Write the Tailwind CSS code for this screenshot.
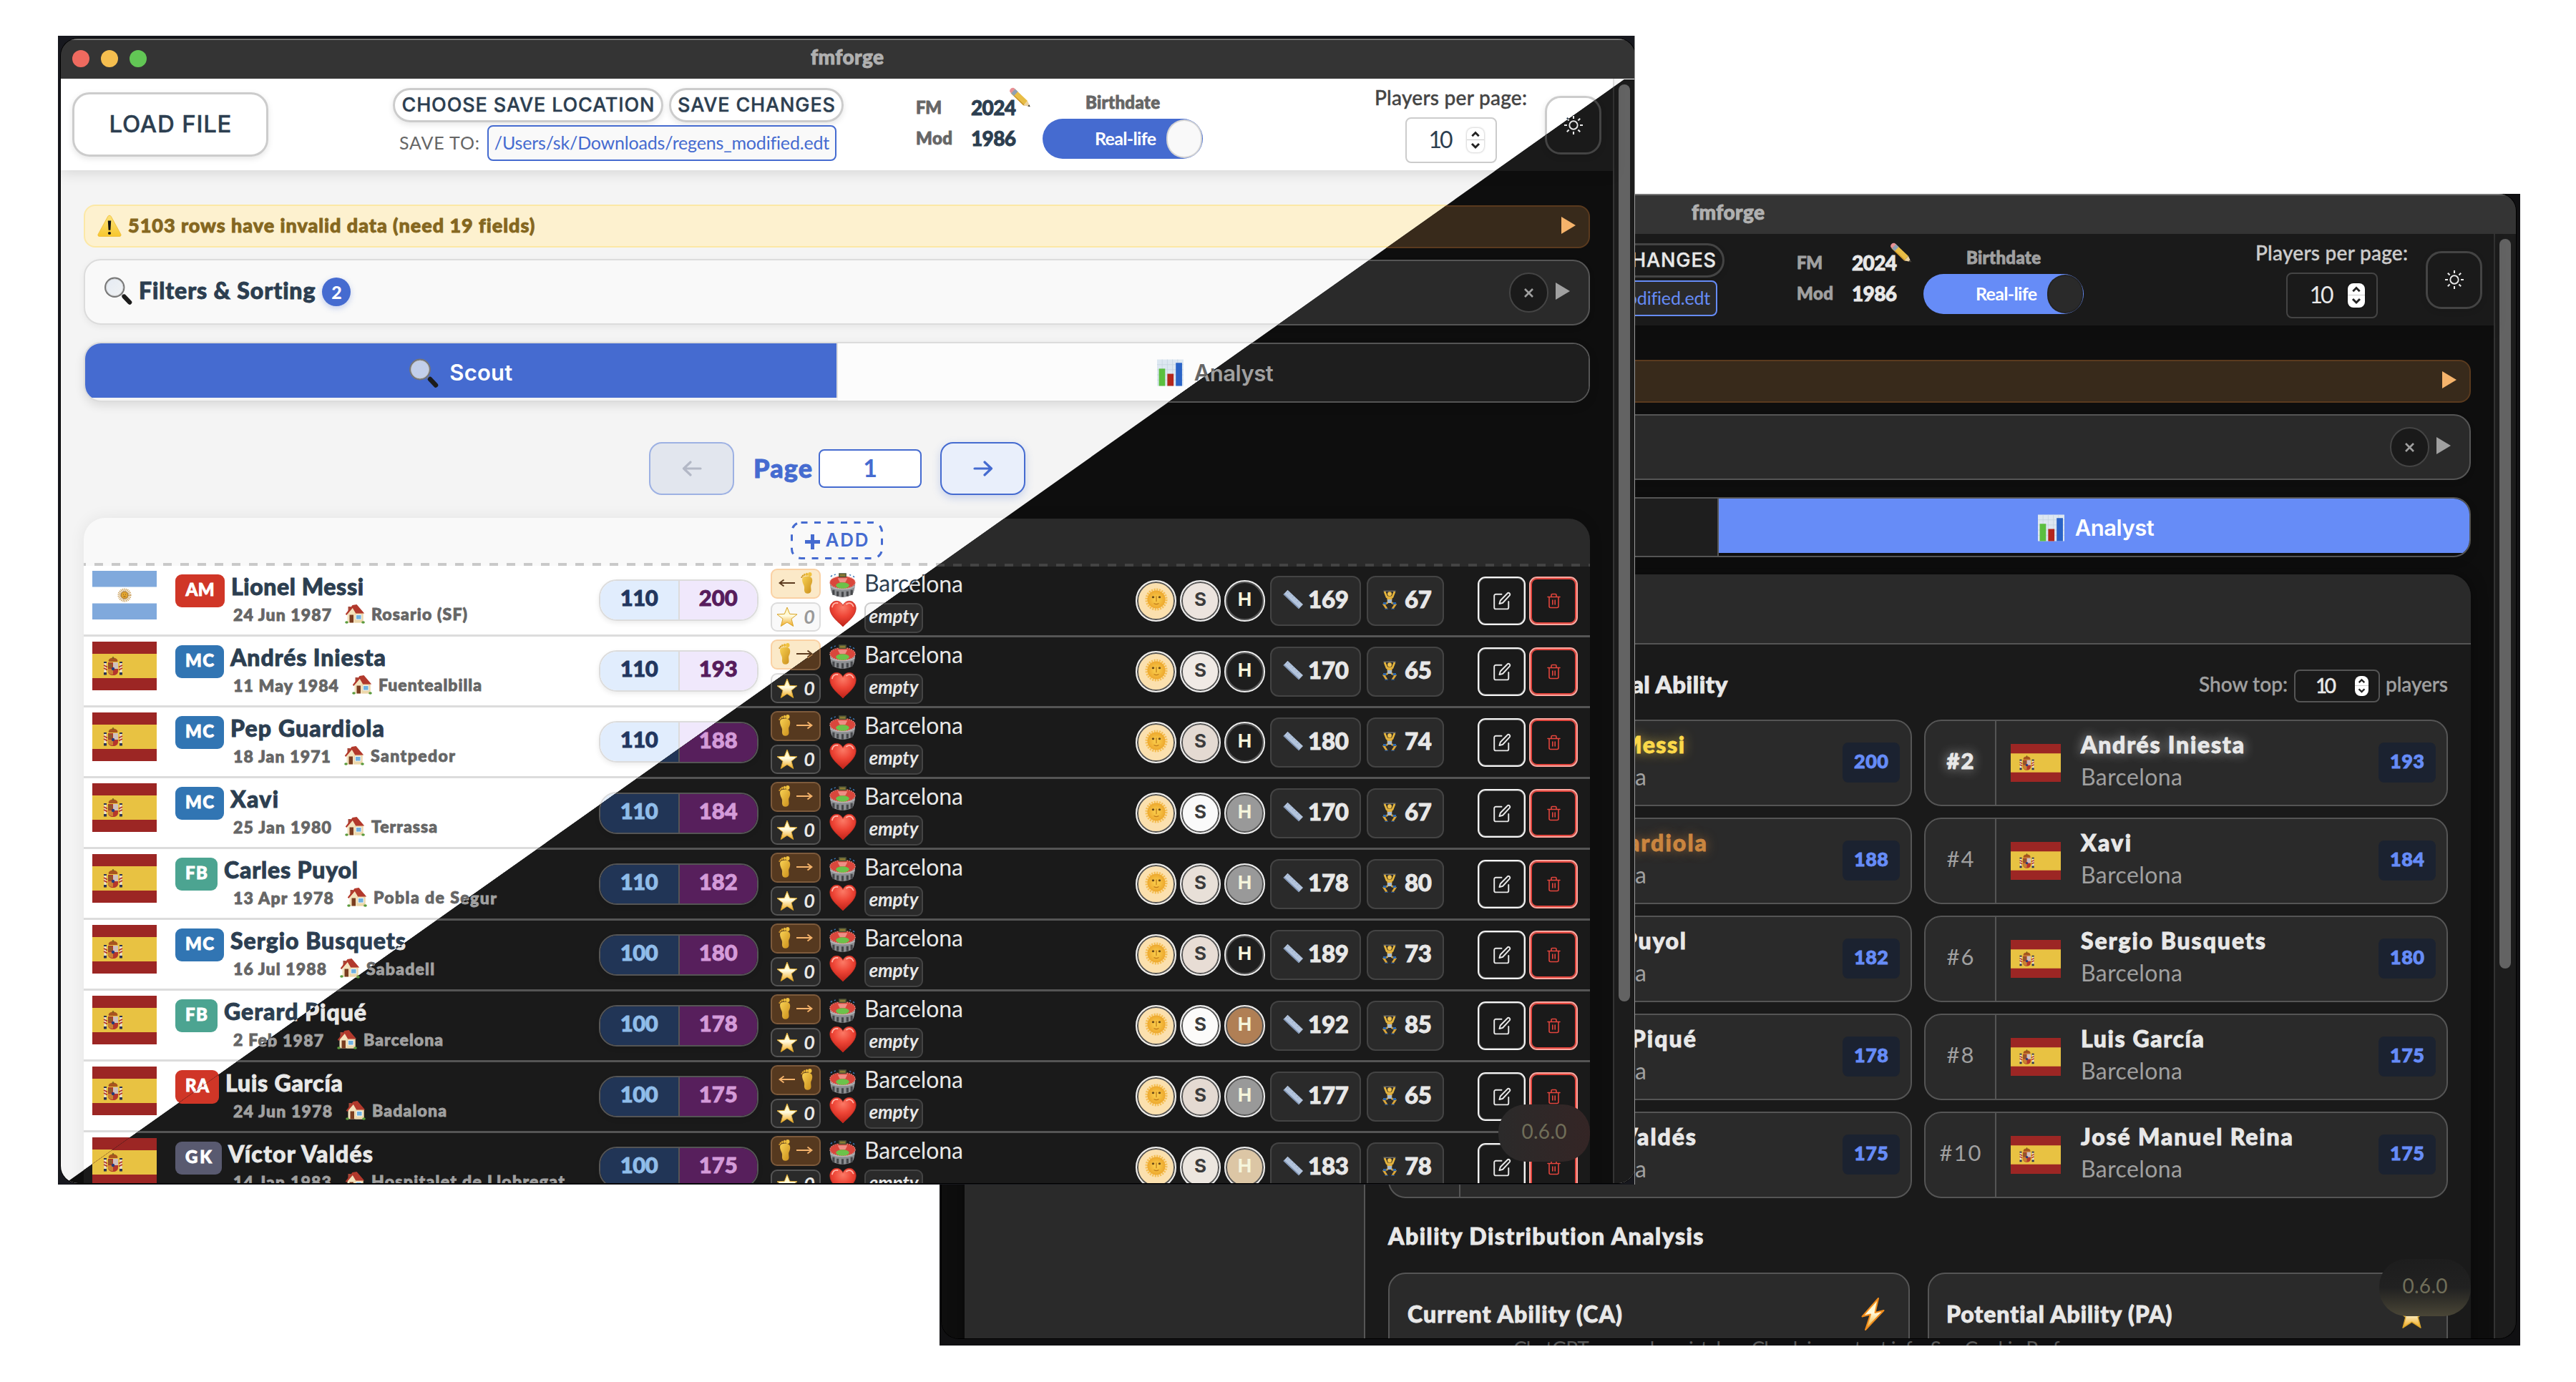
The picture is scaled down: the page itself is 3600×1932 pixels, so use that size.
<!DOCTYPE html>
<html lang="en">
<head>
<meta charset="utf-8">
<title>fmforge</title>
<script src="https://cdn.jsdelivr.net/npm/@tailwindcss/browser@4"></script>
</head>
<body class="bg-white">
<svg class="absolute w-0 h-0" aria-hidden="true">
  <defs>
    <linearGradient id="gold" x1="0" y1="0" x2="0" y2="1"><stop offset="0" stop-color="#fff3b0"/><stop offset=".45" stop-color="#fffbe0"/><stop offset="1" stop-color="#f0a81c"/></linearGradient>
    <linearGradient id="warm" x1="0" y1="0" x2="0" y2="1"><stop offset="0" stop-color="#fbe27a"/><stop offset="1" stop-color="#f7c72e"/></linearGradient>
    <radialGradient id="red" cx=".5" cy=".25" r=".8"><stop offset="0" stop-color="#fb7a66"/><stop offset=".45" stop-color="#ee4536"/><stop offset="1" stop-color="#b81d14"/></radialGradient>
    <linearGradient id="foot" x1="0" y1="0" x2="1" y2="1"><stop offset="0" stop-color="#f9d254"/><stop offset="1" stop-color="#c98d1a"/></linearGradient>
    <radialGradient id="sun"><stop offset="0" stop-color="#fbd04e"/><stop offset="1" stop-color="#eda82e"/></radialGradient>
    <linearGradient id="glass" x1="0" y1="0" x2="1" y2="1"><stop offset="0" stop-color="#dfe7f2" stop-opacity=".8"/><stop offset="1" stop-color="#eef0f2" stop-opacity=".75"/></linearGradient>
  </defs>
  <symbol id="i-warn" viewBox="0 0 34 31"><path d="M17 1.2c1 0 1.7.5 2.2 1.4l13.6 24.8c.9 1.700-.1 3.100-1.900 3.100H3.100c-1.800 0-2.800-1.400-1.900-3.100L14.800 2.600c.5-.9 1.200-1.400 2.200-1.400z" fill="url(#warm)" stroke="#efb92c" stroke-width=".8"/><path d="M14.800 8.500h4.400l-.8 13.200h-2.800z" fill="#111"/><circle cx="17" cy="26" r="2.100" fill="#111"/></symbol>
  <symbol id="i-glass" viewBox="0 0 42 42"><path d="M27 27l3 3" stroke="#8d8d8d" stroke-width="3.500"/><path d="M30 29.500l8 8.500" stroke="#1c1c1c" stroke-width="6.500" stroke-linecap="round"/><circle cx="16" cy="16" r="13.800" fill="url(#glass)" stroke="#777" stroke-width="2.200"/><circle cx="16" cy="16" r="12.400" fill="none" stroke="#c4c4c4" stroke-width=".8"/></symbol>
  <symbol id="i-chart" viewBox="0 0 36 36"><path d="M0 0h36v36H0z" fill="#dde7f1"/><path d="M0 7h36M0 14h36M0 21h36M0 28h36M7 0v36M14 0v36M21 0v36M28 0v36" stroke="#c5d2df" stroke-width=".7"/><path d="M2.500 12.500H11V36H2.500z" fill="#5bbf3f"/><path d="M14 19.500h8.500V36H14z" fill="#b3261c"/><path d="M25.500 4.500H34V36h-8.500z" fill="#2a63c6"/></symbol>
  <symbol id="i-house" viewBox="0 0 28 28"><path d="M4.500 4h4v8h-4z" fill="#a5483a"/><path d="M3.500 13.500L11 5l5 0 9.500 8.500V26.500H3.500z" fill="#f3e2bd"/><path d="M13.500 12.500h12v14h-12z" fill="#ecd7ab"/><path d="M.8 14.500L10.500 2 16.500 1l10.700 12.500h-12L10.800 6 2.300 16z" fill="#b2392c"/><path d="M6.500 15.500h5.500v11H6.500z" fill="#7a3d20"/><path d="M15.500 15.500h7.500v6.500h-7.500z" fill="#6fb1e0" stroke="#fff" stroke-width=".8"/><ellipse cx="2.500" cy="26" rx="2.300" ry="1.800" fill="#5a9a3c"/><ellipse cx="25.500" cy="26" rx="2.300" ry="1.800" fill="#5a9a3c"/></symbol>
  <symbol id="i-foot" viewBox="0 0 17 30"><path d="M2.500 8c1-2.600 9.500-4 12.500-.5 2.200 3 1 7-.4 10-1 2.500.1 5.500-.1 8.300-.2 2.800-2.400 4-4.800 4-2.600 0-4.500-1.600-4.700-4.300-.2-2.800.6-4.500-.6-7.200C3 15.500 1.200 11.500 2.500 8z" fill="url(#foot)"/><ellipse cx="12.800" cy="3" rx="2.700" ry="2.900" fill="#f0c240"/><ellipse cx="8.500" cy="2.900" rx="1.700" ry="2.100" fill="#eab93a"/><ellipse cx="5.300" cy="3.600" rx="1.400" ry="1.800" fill="#e0ad34"/><ellipse cx="2.900" cy="5" rx="1.200" ry="1.500" fill="#d6a02c"/><ellipse cx="1.400" cy="6.900" rx="1" ry="1.200" fill="#c9922a"/></symbol>
  <symbol id="i-stadium" viewBox="0 0 38 36"><path d="M.8 14c0 4 1 11 2.600 15 1.600 3.500 8 6.200 15.600 6.200s14-2.700 15.600-6.200c1.600-4 2.600-11 2.600-15z" fill="#8d8f92"/><path d="M6 25v7M12 27v7M19 27.500V35M26 27v7M32 25v7" stroke="#45474a" stroke-width="3.200"/><path d="M1.500 19.500c5 5.500 30 5.500 35 0" stroke="#b9bbbd" stroke-width="1.400" fill="none"/><ellipse cx="19" cy="14" rx="18.200" ry="9" fill="#d9473c"/><ellipse cx="19" cy="14" rx="18.200" ry="9" fill="none" stroke="#f0948a" stroke-width="1.200" stroke-dasharray="1.500 1.500"/><path d="M12 8l3 6h8l3-6z" fill="#ee8f86"/><ellipse cx="19" cy="18.500" rx="9.500" ry="4.300" fill="#6cc24a"/><path d="M13.500.8h11v6h-11z" fill="#4d5338"/><path d="M15 2.300h8v3h-8z" fill="#8a7b33"/><path d="M2 6l2-2M7 3.500l2-1M29 3l2 1M34 5l2 1.500" stroke="#3b78b8" stroke-width="1.600"/></symbol>
  <symbol id="i-heart" viewBox="0 0 38 37"><path d="M19 36.500C14 31 .8 22 .8 11.200.8 5 5 .8 10 .8c4.200 0 7.400 2.500 9 6.200 1.600-3.700 4.800-6.200 9-6.200 5 0 9.200 4.200 9.200 10.400C37.200 22 24 31 19 36.500z" fill="url(#red)" stroke="#c22a20" stroke-width=".8"/><path d="M4 9c1-4 4-6 7.500-5.500M24 5c4-3 8-1 9.500 3" stroke="#ffb5a8" stroke-width="1.800" fill="none" stroke-linecap="round"/></symbol>
  <symbol id="i-star" viewBox="0 0 30 29"><path d="M15 1l3.700 9.300 10.300.5-8 6.400 2.700 10.300L15 21.900l-8.700 5.600L9 17.200l-8-6.400 10.300-.5z" fill="url(#gold)" stroke="#d9a52b" stroke-width="1" stroke-linejoin="round"/></symbol>
  <symbol id="i-sunface" viewBox="0 0 32 32"><circle cx="16" cy="16" r="13.800" fill="none" stroke="#f5bf55" stroke-width="3.500" stroke-dasharray="2.200 1.400"/><circle cx="16" cy="16" r="12.500" fill="url(#sun)"/><ellipse cx="11.500" cy="12.800" rx="1.700" ry="1.500" fill="#6b4a18"/><ellipse cx="20.500" cy="12.800" rx="1.700" ry="1.500" fill="#6b4a18"/><path d="M16 12v6.500M13 21.800c1.800 1 4.200 1 6 0" stroke="#c07c1c" stroke-width="1.300" fill="none" stroke-linecap="round"/></symbol>
  <symbol id="i-ruler" viewBox="0 0 28 28"><path d="M6.500.8L28 21l-6 6.200L.5 7z" fill="#b3c4dc"/><path d="M22 27.200L.5 7l1-1.300 21.500 20.300z" fill="#7e93b3"/><path d="M8 2.600l-2 2.400M11.500 5.800L10 7.600M15 9l-2 2.400M18.500 12.200L17 14M22 15.400l-2 2.400" stroke="#8fa4c4" stroke-width=".9"/></symbol>
  <symbol id="i-lift" viewBox="0 0 26 28"><path d="M1 2.200h24" stroke="#8a8a8a" stroke-width="1"/><path d="M.5 0h4v7h-4zM21.500 0h4v7h-4z" fill="#2c2c2c"/><path d="M6 3l3 7.500 4 1 4-1 3-7.500" stroke="#e6b53b" stroke-width="2.800" fill="none"/><circle cx="13" cy="6.200" r="3" fill="#eec04c"/><path d="M9 9.500h8l-1 9h-6z" fill="#e0b040"/><path d="M10 14h6v5h-6z" fill="#a9bcd2"/><path d="M10.500 18.500L5 21l4 6M15.500 18.500L21 21l-4 6" stroke="#dca73a" stroke-width="2.800" fill="none"/><path d="M4 19.500h4.500M17.500 19.500H22" stroke="#2f6ab0" stroke-width="3"/><path d="M6 27.500h5M15 27.500h5" stroke="#264f87" stroke-width="1.400"/></symbol>
  <symbol id="i-pencil" viewBox="0 0 30 28"><path d="M8 2.500l18 17-5.500 6.200-18-17z" fill="#e8bd45"/><path d="M6 10.500l17 15.700-3-.5-17.500-17z" fill="#c9942b"/><path d="M8.500 2.800l4 3.700-5.500 6-4-3.700z" fill="#8fa0b4"/><path d="M3 8.800C.5 7 .5 4.500 2.500 2.500S7 .8 8.700 2.800z" fill="#e88f94"/><path d="M26 19.500l3.700 8.200-9.200-2z" fill="#ecd3a0"/><path d="M28.300 24.700l1.400 3-3.400-.8z" fill="#333"/></symbol>
  <symbol id="i-bolt" viewBox="0 0 33 46"><path d="M24 1L1.500 26.500l11.500-3L6 45l25.500-27-12 3z" fill="url(#gold)" stroke="#f08c1c" stroke-width="2" stroke-linejoin="round"/></symbol>
  <symbol id="i-edit" viewBox="0 0 24 24"><path d="M12 3.500H4.500A2 2 0 0 0 2.500 5.500v15a2 2 0 0 0 2 2h14.500a2 2 0 0 0 2-2V13M20 1.800a2.100 2.100 0 0 1 2.600 3L13.500 14.500l-4.300 1.300 1.200-4.300z" fill="none" stroke="currentColor" stroke-width="1.800" stroke-linecap="round" stroke-linejoin="round"/></symbol>
  <symbol id="i-trash" viewBox="0 0 19 21"><path d="M1 5h17M6 5V2.500c0-.8.500-1.500 1.300-1.500h4.400c.8 0 1.300.7 1.300 1.500V5M3 5v13c0 1.200.8 2 2 2h9c1.200 0 2-.8 2-2V5M7.800 9.500v6M11.200 9.500v6" fill="none" stroke="currentColor" stroke-width="1.600" stroke-linecap="round"/></symbol>
  <symbol id="i-sun" viewBox="0 0 28 28"><circle cx="14" cy="14" r="5.700" fill="none" stroke="currentColor" stroke-width="1.900"/><path d="M14 1v4M14 23v4M1 14h4M23 14h4M4.800 4.800l2.800 2.800M20.400 20.400l2.800 2.800M4.800 23.200l2.800-2.800M20.400 7.600l2.800-2.800" stroke="currentColor" stroke-width="2.100"/></symbol>
  <symbol id="f-es" viewBox="0 0 90 68" preserveAspectRatio="none"><path d="M0 0h90v68H0z" fill="#9c2624"/><path d="M0 17h90v34H0z" fill="#e8c242"/><path d="M16.500 30h3v15h-3zM38.500 30h3v15h-3z" fill="#e9e2d2"/><path d="M16 43h4v3.500h-4zM38 43h4v3.500h-4zM16 28h4v2h-4zM38 28h4v2h-4z" fill="#2c3350"/><path d="M16 33l5 2.500M16 37l5 2.500M42 33l-5 2.500M42 37l-5 2.500" stroke="#b03028" stroke-width="1.800"/><path d="M22 29h14v12c0 4-3 6-7 6s-7-2-7-6z" fill="#b5372c"/><path d="M29 29h7v9h-7z" fill="#cfc0bd"/><path d="M22 38h7v8c-4 0-7-1.500-7-5z" fill="#c98232"/><path d="M22.500 30.500h5.500v6h-5.500z" fill="#8c5a2a"/><circle cx="29" cy="38" r="2.200" fill="#273b7a"/><path d="M23 28c-1.500-3 2-5.500 6-5.500s7.500 2.500 6 5.500z" fill="#a8541f"/><path d="M29 21v3" stroke="#6b5a1a" stroke-width="1.400"/></symbol>
  <symbol id="f-ar" viewBox="0 0 90 68" preserveAspectRatio="none"><path d="M0 0h90v68H0z" fill="#80a9dc"/><path d="M0 22.500h90v23H0z" fill="#fff"/><circle cx="45" cy="34" r="7.300" fill="none" stroke="#c79a52" stroke-width="4.500" stroke-dasharray="1 1.100"/><circle cx="45" cy="34" r="5" fill="#e2a52f" stroke="#8a5a1c" stroke-width=".8"/><path d="M43 33h1M46 33h1M43.500 36h3" stroke="#7a4a14" stroke-width=".9"/></symbol>
</svg>

<div id="stage" class="relative w-[3600px] h-[1932px] overflow-hidden bg-white font-[Lato,sans-serif]"></div>

<script>
const LIGHT = '[--page:#f4f4f4] [--bar:#ffffff] [--card:#f9f9f9] [--row:#ffffff] [--line:#dcdcdc] [--ctl:#cccccc] [--ink:#2c3e50] [--mut:#666666] [--lab:#444444] [--acc:#456bd0] [--warnbg:#fdf1cf] [--warnln:#fce8a6] [--warn:#856720] [--arrow:#666666] [--tab:#fcfcfc] [--dash:#c9c9c9] [--knob:#f9f9f9] [--cabg:#e1edfd] [--ca:#22365e] [--pabg:#f0e8fc] [--pa:#571c5c] [--ftbg:#fbe9c8] [--ftln:#fad1a4] [--ft:#5b3a1e] [--zero:#999999] [--track:#fafafa] [--thumb:#c1c1c1] [--tln:#e5e5e5] [--pg:#e9effb]';
const DARK = '[--page:#0e0e0e] [--bar:#1a1a1a] [--card:#2a2a2a] [--row:#1a1a1a] [--line:#555555] [--ctl:#444444] [--ink:#e8e8e8] [--mut:#a0a0a0] [--lab:#cccccc] [--acc:#668cf7] [--warnbg:#382a1b] [--warnln:#5a3a1e] [--warn:#f5b36b] [--arrow:#a0a0a0] [--tab:#1e1e1e] [--dash:#444444] [--knob:#2a2a2a] [--cabg:#213556] [--ca:#90bdea] [--pabg:#571f5c] [--pa:#d49bd9] [--ftbg:#56391f] [--ftln:#7d5a3b] [--ft:#f5b36b] [--zero:#e8e8e8] [--track:#1c1c1c] [--thumb:#636363] [--tln:#333333] [--pg:#1a2236]';

// text run spaced to an exact advance width
const t = (s, w, c = '') => `<span data-w="${w}" class="inline-block shrink-0 whitespace-pre leading-none -translate-y-px [.font-black_&]:[-webkit-text-stroke:0.9px] [.font-medium_&]:[-webkit-text-stroke:0.4px] ${c}">${s}</span>`;
const ico = (id, c) => `<svg class="shrink-0 ${c}"><use href="#${id}"/></svg>`;

const spinner = c => `<span class="${c} flex flex-col rounded-[8px] bg-white shadow-[0_0_3px_#0005] text-[#222]">
  <svg class="w-full h-1/2 border-b border-[#ccc]" viewBox="0 0 24 17"><path d="M7 12l5-5 5 5" fill="none" stroke="currentColor" stroke-width="3"/></svg>
  <svg class="w-full h-1/2" viewBox="0 0 24 17"><path d="M7 5l5 5 5-5" fill="none" stroke="currentColor" stroke-width="3"/></svg></span>`;

const toolbar = () => `
<header class="relative z-10 flex items-start w-[2169px] h-[128px] bg-(--bar) shadow-[0_4px_18px_#0000001f]">
  <div class="ml-[16px] mt-[19px] w-[274px] h-[90px] shrink-0 flex items-center justify-center rounded-[24px] border-3 border-(--ctl) shadow-[0_3px_8px_#0000001a] text-(--ink) font-[Inter] font-medium text-[33px]">${t('LOAD FILE', 171)}</div>
  <div class="ml-[174px] mt-[13px] w-[630px] shrink-0">
    <div class="flex gap-2 text-(--ink) font-[Inter] font-medium text-[27px]">
      <div class="w-[378px] h-[48px] flex items-center justify-center rounded-full border-3 border-(--ctl) shadow-[0_3px_8px_#0000001a]">${t('CHOOSE SAVE LOCATION', 353)}</div>
      <div class="w-[244px] h-[48px] flex items-center justify-center rounded-full border-3 border-(--ctl) shadow-[0_3px_8px_#0000001a]">${t('SAVE CHANGES', 220)}</div>
    </div>
    <div class="flex items-center mt-1 pl-[9px] gap-[11px] text-[25px]">
      ${t('SAVE TO:', 112, 'text-(--mut)')}
      <div class="w-[488px] h-[50px] shrink-0 flex items-center justify-center rounded-[8px] border-2 border-(--acc) bg-(--card) text-(--acc)">${t('/Users/sk/Downloads/regens_modified.edt', 468)}</div>
    </div>
  </div>
  <div class="relative ml-[101px] mt-[19px] w-[140px] shrink-0 grid grid-cols-[77px_63px] auto-rows-[43px] items-center justify-items-start text-[24px] font-black text-(--mut)">
    ${t('FM', 36)}${t('2024', 63, 'text-[28px] text-(--ink)')}
    ${t('Mod', 51)}${t('1986', 63, 'text-[28px] text-(--ink)')}
    ${ico('i-pencil', 'absolute left-[130px] -top-[8px] w-[30px] h-[29px]')}
  </div>
  <div class="ml-[37px] mt-[18px] w-[224px] shrink-0 flex flex-col items-center">
    <div class="h-[32px] flex items-center text-[24px] font-black text-(--mut)">${t('Birthdate', 104)}</div>
    <div class="mt-[6px] w-full h-[56px] flex items-center justify-end p-px rounded-full bg-(--acc) text-white text-[25px] font-bold">${t('Real-life', 86)}<span class="ml-[14px] w-[50px] h-[54px] rounded-full bg-(--knob) border-2 border-black/15"></span></div>
  </div>
  <div class="ml-[240px] mt-[11px] w-[213px] shrink-0 flex flex-col items-center">
    <div class="h-[32px] flex items-center text-[28px] font-medium text-(--lab)">${t('Players per page:', 213)}</div>
    <div class="mt-[11px] w-[128px] h-[64px] pl-[31px] flex items-center rounded-[8px] border-2 border-(--ctl) text-[32px] text-(--ink)">${t('10', 34)}${spinner('ml-[19px] w-[24px] h-[34px]')}</div>
  </div>
  <div class="ml-[25px] mt-[24px] w-[79px] h-[81px] shrink-0 flex items-center justify-center rounded-[22px] border-3 border-(--ctl) text-(--ink) shadow-[0_3px_8px_#0000001a]">${ico('i-sun', 'w-[28px] h-[28px] -mt-[2px]')}</div>
</header>`;

const tab = (on, icon, label, w, side) => `<div class="flex-1 flex items-center justify-center gap-[15px] font-[Inter] font-semibold text-[31px] ${on ? 'bg-(--acc) text-white h-[76px] pt-[6px]' : 'bg-(--tab) text-(--mut) pt-[2px]'} ${side}">${ico(icon, icon === 'i-chart' ? 'w-[37px] h-[42px] ml-[6px]' : 'w-[42px] h-[43px]')}${t(label, w)}</div>`;

const head = scout => `
<section class="flex items-center h-[60px] rounded-[16px] border-2 border-(--warnln) bg-(--warnbg) pl-[17px] pr-[18px] text-(--warn)">
  ${ico('i-warn', 'w-[34px] h-[31px] -mt-[2px]')}
  <span class="ml-[9px] -mt-[2px] text-[27px] font-black flex">${t('5103 rows have invalid data (need 19 fields)', 568)}</span>
  <svg class="ml-auto -mt-1 w-[20px] h-[24px]" viewBox="0 0 20 24"><path d="M0 0l20 12L0 24z" fill="currentColor"/></svg>
</section>
<section class="flex items-center h-[92px] mt-[16px] rounded-[24px] border-2 border-(--line) bg-(--card) pl-[26px] pr-[26px] text-(--ink) shadow-[0_3px_10px_#0000000f]">
  ${ico('i-glass', 'w-[40px] h-[41px] -mt-[3px]')}
  <span class="ml-[9px] -mt-[2px] text-[32px] font-black flex">${t('Filters &amp; Sorting', 247)}</span>
  <span class="ml-[10px] w-[40px] h-[40px] flex items-center justify-center rounded-full bg-(--acc) text-white text-[25px] font-black leading-none shadow-[0_3px_8px_#456bd04d]">2</span>
  <span class="ml-auto w-[55px] h-[56px] flex items-center justify-center rounded-full border-2 border-(--ctl) bg-(--row) text-(--mut)"><svg class="w-[13px] h-[13px]" viewBox="0 0 13 13"><path d="M1 1l11 11M12 1L1 12" stroke="currentColor" stroke-width="2.600"/></svg></span>
  <svg class="ml-[10px] -mt-[4px] w-[20px] h-[24px] text-(--arrow)" viewBox="0 0 20 24"><path d="M0 0l20 12L0 24z" fill="currentColor"/></svg>
</section>
<nav class="flex items-stretch h-[84px] mt-[24px] rounded-[24px] border-2 border-(--line) overflow-hidden bg-(--page) shadow-[0_5px_14px_#0000001a]">
  ${tab(scout, 'i-glass', 'Scout', 88, 'border-r-2 border-(--line)')}
  ${tab(!scout, 'i-chart', 'Analyst', 111, '')}
</nav>`;

const P = [
  ['ar','AM','bg-[#d03627]',69,40,'Lionel Messi',185,'24 Jun 1987',137,'Rosario (SF)',134,110,200,0,'bg-[#ece4de]','bg-[#1e1e1e]',169,67],
  ['es','MC','bg-[#3175b3]',68,40,'Andrés Iniesta',217,'11 May 1984',147,'Fuentealbilla',144,110,193,1,'bg-[#f0eae5]','bg-[#1e1e1e]',170,65],
  ['es','MC','bg-[#3175b3]',68,40,'Pep Guardiola',215,'18 Jan 1971',136,'Santpedor',118,110,188,1,'bg-[#e4dad2]','bg-[#1e1e1e]',180,74],
  ['es','MC','bg-[#3175b3]',68,40,'Xavi',67,'25 Jan 1980',137,'Terrassa',92,110,184,1,'bg-[#fafafa]','bg-[#999999]',170,67],
  ['es','FB','bg-[#4ca491]',59,31,'Carles Puyol',187,'13 Apr 1978',140,'Pobla de Segur',172,110,182,1,'bg-[#e8e0d8]','bg-[#999999]',178,80],
  ['es','MC','bg-[#3175b3]',68,40,'Sergio Busquets',245,'16 Jul 1988',130,'Sabadell',95,100,180,1,'bg-[#e8ddd5]','bg-[#1e1e1e]',189,73],
  ['es','FB','bg-[#4ca491]',59,31,'Gerard Piqué',199,'2 Feb 1987',126,'Barcelona',111,100,178,1,'bg-[#fcfbfa]','bg-[#b07f55]',192,85],
  ['es','RA','bg-[#d03627]',61,33,'Luis García',164,'24 Jun 1978',138,'Badalona',104,100,175,0,'bg-[#e4dad2]','bg-[#999999]',177,65],
  ['es','GK','bg-[#595a70]',65,37,'Víctor Valdés',202,'14 Jan 1983',137,'Hospitalet de Llobregat',270,100,175,1,'bg-[#ece6df]','bg-[#dcc6a5]',183,78],
];
const arrow = r => `<svg class="w-[23px] h-[12px] text-(--ft)" viewBox="0 0 23 12"><path d="${r ? 'M0 6h21M15.500 1.500L21.500 6l-6 4.500' : 'M23 6H2M7.500 1.500L1.500 6l6 4.500'}" fill="none" stroke="currentColor" stroke-width="1.900"/></svg>`;
const coin = (bg, inner) => `<div class="w-[57px] h-[58px] flex items-center justify-center rounded-full border-2 border-[#ededed] shadow-[inset_0_0_0_2px_#555] ${bg}">${inner}</div>`;

const row = ([fl,pos,pc,pw,ptw,name,nw,date,dw,place,plw,ca,pa,right,sk,hr,h,w]) => `
<div class="flex items-start h-[99px] border-b-3 border-(--line) bg-(--row)">
  ${ico('f-' + fl, 'ml-[12px] mt-[7px] w-[90px] h-[68px]')}
  <div class="ml-[26px] mt-[12px] w-[592px] shrink-0">
    <div class="flex h-[46px] text-[32px] font-black text-(--ink)">
      <span class="h-[46px] flex items-center justify-center rounded-[9px] text-white text-[24px] ${pc}" style="width:${pw}px">${t(pos, ptw, '-mt-[3px]')}</span>
      <span class="ml-[9px] mt-[2px] flex">${t(name, nw)}</span>
    </div>
    <div class="flex items-center h-[30px] -mt-[4px] pl-[81px] text-[23px] font-black text-(--mut)">
      ${t(date, dw)}${ico('i-house', 'ml-[19px] w-[28px] h-[28px] -mt-1')}${t(place, plw, 'ml-[9px] -mt-[2px]')}
    </div>
  </div>
  <div class="mt-[19px] w-[223px] h-[58px] shrink-0 flex rounded-[25px] border-2 border-(--line) overflow-hidden shadow-[0_3px_7px_#00000014] text-[31px] font-black">
    <span class="flex-1 flex items-center justify-center pb-[5px] bg-(--cabg) text-(--ca) border-r-2 border-(--line)">${t(ca, 53)}</span>
    <span class="flex-1 flex items-center justify-center pb-[5px] bg-(--pabg) text-(--pa)">${t(pa, 54)}</span>
  </div>
  <div class="ml-[17px] mt-[4px] w-[70px] shrink-0">
    <div class="h-[42px] flex items-center justify-center gap-[8px] pb-[2px] rounded-[9px] border-2 border-(--ftln) bg-(--ftbg)">${right ? ico('i-foot', 'w-[17px] h-[30px]') + arrow(1) : arrow(0) + ico('i-foot', 'w-[17px] h-[30px]')}</div>
    <div class="mt-[5px] h-[41px] flex items-center justify-center gap-[8px] pb-px rounded-[9px] border-2 border-(--line) bg-(--card) text-[27px] italic font-bold text-(--zero)">${ico('i-star', 'w-[30px] h-[29px]')}${t('0', 13)}</div>
  </div>
  <div class="ml-[12px] mt-[9px] w-[38px] shrink-0">${ico('i-stadium', 'w-[37px] h-[36px]')}${ico('i-heart', 'mt-[3px] w-[38px] h-[38px]')}</div>
  <div class="ml-[11px] mt-[3px] w-[379px] shrink-0">
    <div class="h-[44px] flex items-center text-[32px] text-(--ink)">${t('Barcelona', 138)}</div>
    <div class="mt-[4px] w-[82px] h-[42px] flex items-center justify-center pb-[4px] rounded-[9px] border-2 border-(--ctl) bg-(--card) text-[26px] italic font-bold text-(--zero)">${t('empty', 69)}</div>
  </div>
  <div class="mt-[19px] flex gap-[5px] font-[Inter] font-bold text-[26px] leading-none">
    ${coin('bg-[#fbe0ae]', ico('i-sunface', 'w-[32px] h-[32px] -mt-1'))}
    ${coin(sk, '<span class="-mt-1 text-[#3c3c3c]">S</span>')}
    ${coin(hr, '<span class="-mt-1 text-[#f5f5dc]">H</span>')}
  </div>
  <div class="ml-[7px] mt-[13px] flex gap-[8px] text-[33px] font-black text-(--ink)">
    <div class="w-[127px] h-[70px] flex items-center gap-[7px] pl-[16px] pb-1 rounded-[12px] border-2 border-(--ctl) bg-(--card)">${ico('i-ruler', 'w-[28px] h-[28px]')}${t(h, 57)}</div>
    <div class="w-[108px] h-[70px] flex items-center gap-[8px] pl-[17px] pb-1 rounded-[12px] border-2 border-(--ctl) bg-(--card)">${ico('i-lift', 'w-[26px] h-[28px]')}${t(w, 38)}</div>
  </div>
  <div class="ml-[47px] mt-[14px] flex gap-[5px]">
    <div class="w-[67px] h-[68px] flex items-center justify-center rounded-[11px] border-2 border-[#f4f4f4] shadow-[inset_0_0_0_1px_#777] text-(--ink)">${ico('i-edit', 'w-[27px] h-[26px]')}</div>
    <div class="w-[68px] h-[68px] flex items-center justify-center rounded-[11px] border-2 border-[#ffa8a0] shadow-[inset_0_0_0_2px_#e2453d] text-[#e2453d]">${ico('i-trash', 'w-[19px] h-[22px]')}</div>
  </div>
</div>`;

const pgArrow = c => `<svg class="w-[28px] h-[22px] ${c}" viewBox="0 0 28 22"><path d="M2 11h23M16 2l9.500 9L16 20" fill="none" stroke="currentColor" stroke-width="3.200" stroke-linecap="round" stroke-linejoin="round"/></svg>`;
const scoutBody = () => `
<div class="flex items-center h-[74px] mt-[56px] pl-[790px] text-(--acc) font-black text-[36px]">
  <div class="w-[119px] h-[74px] flex items-center justify-center rounded-[18px] border-2 border-[#9db1e3] bg-[#e2e6ee] text-[#b3b8c6]">${pgArrow('-scale-x-100')}</div>
  ${t('Page', 82, 'ml-[27px]')}
  <div class="ml-[9px] w-[144px] h-[54px] flex items-center justify-center pb-[2px] rounded-[8px] border-2 border-(--acc) bg-(--row) font-bold text-[34px] leading-none">1</div>
  <div class="ml-[26px] w-[119px] h-[74px] flex items-center justify-center rounded-[18px] border-2 border-(--acc) bg-(--pg) shadow-[0_4px_12px_#456bd040]">${pgArrow('')}</div>
</div>
<div class="mt-[32px] rounded-t-[30px] overflow-hidden bg-(--card) shadow-[0_0_22px_#00000012]">
  <div class="h-[63px] pt-[5px] flex justify-center">
    <div class="relative w-[129px] h-[53px] flex items-center justify-center gap-[7px] text-(--acc) font-[Inter] font-semibold text-[26px]">
      <svg class="absolute inset-0 w-full h-full" viewBox="0 0 129 53"><rect x="1.500" y="1.500" width="126" height="50" rx="13" fill="none" stroke="currentColor" stroke-width="3" stroke-dasharray="9 9.500"/></svg>
      <svg class="w-[21px] h-[21px] mt-[3px]" viewBox="0 0 21 21"><path d="M10.500 0v21M0 10.500h21" stroke="currentColor" stroke-width="5"/></svg>${t('ADD', 60)}
    </div>
  </div>
  <svg class="block w-full h-[4px] text-(--dash) bg-(--card)"><path d="M-9 2h2200" stroke="currentColor" stroke-width="4" stroke-dasharray="12 12"/></svg>
  ${P.map(row).join('')}
</div>`;

const card = (n, fl, name, w, v, nc = '', rc = 'text-(--mut)') => `
<div class="w-[732px] h-[121px] flex items-stretch rounded-[24px] border-2 border-(--line) bg-(--card)">
  <div class="w-[99px] flex shrink-0 items-center justify-center border-r-2 border-(--line) pb-1 text-[31px] ${rc}">${t('#' + n, n > 9 ? 58 : 38)}</div>
  ${ico('f-' + fl, 'ml-[20px] mt-[32px] w-[70px] h-[53px]')}
  <div class="ml-[28px] flex flex-col items-start">
    <span class="mt-[18px] flex text-[32px] font-black text-(--ink) ${nc}">${t(name, w)}</span>
    <span class="mt-[13px] flex text-[32px] text-(--mut)">${t('Barcelona', 142)}</span>
  </div>
  <div class="ml-auto mr-[15px] mt-[30px] w-[80px] h-[56px] flex items-center justify-center pb-1 rounded-[8px] bg-[#1b2230] text-(--acc) text-[27px] font-black">${t(v, 48)}</div>
</div>`;
const GOLD = 'text-[#fbd84a] [text-shadow:0_0_16px_#fbd84ab3]', SILVER = '[text-shadow:0_0_16px_#ffffffa6]', BRONZE = 'text-[#c9853f] [text-shadow:0_0_16px_#c9853fb3]';

const analystBody = () => `
<div class="mt-[24px] rounded-t-[30px] overflow-hidden bg-(--row) shadow-[0_0_22px_#0006]">
  <div class="h-[98px] bg-(--card) border-b-2 border-(--line)"></div>
  <div class="flex">
    <div class="w-[560px] h-[1000px] bg-(--card) border-r-2 border-(--line)"></div>
    <div class="w-[1481px] ml-[32px]">
      <div class="flex items-center h-[46px] mt-[35px]">
        <span class="flex -mt-[3px] text-[33px] font-black text-(--ink)">${t('Top Players by Potential Ability', 475)}</span>
        <span class="ml-auto flex items-center text-[28px] text-(--mut) font-medium">${t('Show top:', 124, '-mt-1')}
          <span class="ml-[9px] mr-[8px] w-[120px] h-[46px] flex items-center pl-[28px] rounded-[8px] border-2 border-(--line) text-(--ink) text-[28px]">${t('10', 29)}${spinner('ml-[26px] w-[19px] h-[28px]')}</span>${t('players', 87, '-mt-1')}</span>
      </div>
      <div class="grid grid-cols-2 mt-[24px] gap-x-[17px] gap-y-[16px]">
        ${card(1, 'ar', 'Lionel Messi', 195, 200, GOLD, GOLD)}${card(2, 'es', 'Andrés Iniesta', 228, 193, SILVER, 'text-(--ink) font-black ' + SILVER)}
        ${card(3, 'es', 'Pep Guardiola', 226, 188, BRONZE, BRONZE)}${card(4, 'es', 'Xavi', 70, 184)}
        ${card(5, 'es', 'Carles Puyol', 197, 182)}${card(6, 'es', 'Sergio Busquets', 258, 180)}
        ${card(7, 'es', 'Gerard Piqué', 211, 178)}${card(8, 'es', 'Luis García', 172, 175)}
        ${card(9, 'es', 'Víctor Valdés', 211, 175)}${card(10, 'es', 'José Manuel Reina', 296, 175)}
      </div>
      <div class="mt-[38px] flex text-[32px] font-black text-(--ink) leading-none">${t('Ability Distribution Analysis', 441)}</div>
      <div class="grid grid-cols-[729px_727px] mt-[34px] gap-x-[25px] text-[32px] font-black text-(--ink)">
        <div class="h-[140px] flex items-start rounded-[24px] border-2 border-(--line) bg-(--card) pt-[33px] pl-[25px]">${t('Current Ability (CA)', 300, 'mt-[8px]')}${ico('i-bolt', 'ml-auto mr-[33px] w-[33px] h-[46px]')}</div>
        <div class="h-[140px] flex items-start rounded-[24px] border-2 border-(--line) bg-(--card) pt-[33px] pl-[24px]">${t('Potential Ability (PA)', 316, 'mt-[8px]')}${ico('i-star', 'ml-auto mr-[27px] mt-[2px] w-[43px] h-[43px]')}</div>
      </div>
    </div>
  </div>
</div>`;

const bubble = c => `<div class="absolute left-[2009px] top-[1433px] w-[128px] h-[80px] flex items-center justify-center pb-1 rounded-[38px] text-[28px] text-[#706e59] ${c}">${t('0.6.0', 63)}</div>`;

const view = (theme, scout, c) => `
<div class="absolute isolate inset-x-0 top-0 h-[1544px] overflow-hidden bg-(--page) ${theme} ${c}">
  <div class="flex">
    <div class="w-[2169px] shrink-0">${toolbar()}
      <main class="pt-[48px] pl-[32px] pr-[32px]">${head(scout)}${scout ? scoutBody() : analystBody()}</main>
    </div>
    <div class="w-[31px] h-[1544px] shrink-0 border-l-2 border-(--tln) bg-(--track) pt-[7px] pl-[6px]"><div class="w-[16px] rounded-full bg-(--thumb)" style="height:${scout ? 1282 : 1020}px"></div></div>
  </div>
  ${bubble(scout ? 'bg-linear-to-r from-[#2b2a2a] to-[#342525]' : 'bg-linear-to-b from-[#1d1d1d] via-[#212121] to-[#4a4636]')}
</div>`;

const win = (lights, body) => `
<div class="w-[2200px] h-[1600px] rounded-[24px] overflow-hidden bg-[#1a1a1a] shadow-[0_0_0_1px_#000]">
  <div class="relative h-[56px] flex items-center bg-[#343434] border-t-2 border-[#757575]">
    ${lights ? '<span class="ml-[16px] -mt-[2px] flex gap-[16px]"><i class="w-[24px] h-[24px] rounded-full bg-[#ee6a5f]"></i><i class="w-[24px] h-[24px] rounded-full bg-[#f5be4f]"></i><i class="w-[24px] h-[24px] rounded-full bg-[#62c655]"></i></span>' : ''}
    <span class="absolute left-[1048px] top-[10px] flex text-[28px] font-black text-[#b0b0b0]">${t('fmforge', 102)}</span>
  </div>
  <div class="relative h-[1544px]">${body}</div>
</div>`;

document.getElementById('stage').innerHTML = `
<div class="absolute isolate left-[1313px] top-[271px] w-[2209px] h-[1610px] overflow-hidden bg-[#101012] pl-[3px]">
  ${win(false, view(DARK, false, ''))}
  <div class="mt-px flex pl-[799px] text-[28px] text-[#5a5a5a]">${t('ChatGPT can make mistakes. Check important info. See Cookie Preferences.', 856)}</div>
</div>
<div class="absolute isolate left-[81px] top-[50px] w-[2204px] h-[1606px] overflow-hidden bg-[#17181e] pl-[4px] pt-[4px] border-r border-[#999]">
  ${win(true, view(LIGHT, true, 'lightview') + view(DARK, true, 'darkview mt-px [clip-path:polygon(2185px_0,100%_0,100%_100%,5px_100%)]'))}
</div>`;

const edge = x => 110 + (2269.5 - x) * .7085;
function fit() {
  // fit every text run to its advance width
  const runs = [...document.querySelectorAll('[data-w]')];
  for (const el of runs) { el.style.letterSpacing = ''; el.style.marginRight = ''; el.classList.remove('invisible'); }
  const sizes = runs.map(el => el.getBoundingClientRect().width);
  runs.forEach((el, i) => {
    const n = el.textContent.length;
    if (n < 2) return;
    const ls = (el.dataset.w - sizes[i]) / (n - 1);
    el.style.letterSpacing = ls.toFixed(2) + 'px';
    el.style.marginRight = (-ls).toFixed(2) + 'px';
  });
  // drop the text of each theme that lies wholly on the other theme's side of the split
  for (const el of document.querySelectorAll('.lightview [data-w]')) {
    const b = el.getBoundingClientRect();
    if (b.top > edge(b.left) + 2) el.classList.add('invisible');
  }
  for (const el of document.querySelectorAll('.darkview [data-w]')) {
    const b = el.getBoundingClientRect();
    if (b.bottom < edge(b.right) - 2) el.classList.add('invisible');
  }
}
fit();
addEventListener('load', fit);
document.fonts.ready.then(fit);
for (const ms of [50, 200, 500]) setTimeout(fit, ms);
</script>
</body>
</html>
